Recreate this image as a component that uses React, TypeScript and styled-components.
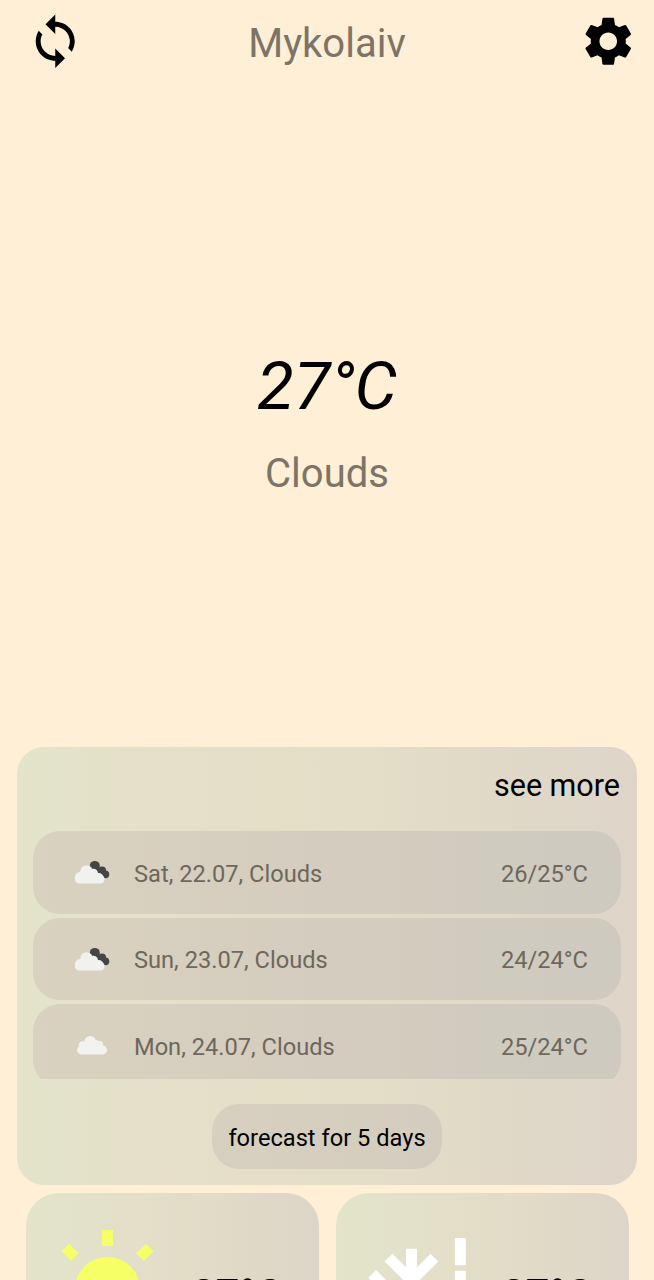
import React from "react";
import styled, { createGlobalStyle } from "styled-components";

const GlobalStyle = createGlobalStyle`
  * { box-sizing: border-box; }
  body { margin: 0; background: #ffefd7; }
`;

const Screen = styled.main`
  height: 1280px;
  overflow: hidden;
  display: flex;
  flex-direction: column;
  background: #ffefd7;
  font-family: Roboto, "Liberation Sans", sans-serif;
  color: #000;
`;

const Header = styled.header`
  flex: none;
  height: 86px;
  padding: 12px 17px 0 26px;
  display: flex;
  justify-content: space-between;
  align-items: flex-start;
`;

const IconButton = styled.button`
  display: block;
  width: 58.5px;
  height: 58.5px;
  padding: 0;
  border: 0;
  background: none;
  svg { display: block; width: 100%; height: 100%; }
`;

const City = styled.h1`
  margin: 8px 9px 0 0;
  font-size: 40px;
  line-height: 48px;
  font-weight: 400;
  color: #7c7467;
`;

const Current = styled.section`
  flex: none;
  height: 661px;
  padding-top: 260px;
  display: flex;
  flex-direction: column;
  align-items: center;
`;

const Temperature = styled.div`
  font-size: 67px;
  line-height: 80px;
  font-style: italic;
`;

const Condition = styled.div`
  margin-top: 24px;
  font-size: 40px;
  line-height: 48px;
  color: #7c7467;
`;

const Panel = styled.section`
  flex: none;
  height: 438px;
  margin: 0 17px;
  padding: 17px 16px 0;
  border-radius: 27px;
  background: linear-gradient(90deg, #e3e4cb 0%, #e5e0c9 20%, #e4ddc7 55%, #dfd8c8 85%, #ded5c8 100%);
  display: flex;
  flex-direction: column;
  align-items: center;
`;

const SeeMore = styled.a`
  align-self: flex-end;
  height: 67px;
  padding-right: 1px;
  font-size: 30.5px;
  line-height: 44px;
`;

const DayList = styled.div`
  width: 100%;
  height: 248px;
  overflow: hidden;
  display: flex;
  flex-direction: column;
  gap: 4px;
`;

const DayRow = styled.div`
  flex: none;
  height: 82.6px;
  padding: 0 33px 0 41px;
  border-radius: 27px;
  background: linear-gradient(90deg, #d9d2c0, #d4cdbf 50%, #cecabf);
  display: flex;
  align-items: center;
  font-size: 23.65px;
  color: #6d675d;
  svg { width: 36px; height: 26px; margin-right: 24px; }
`;

const DayLabel = styled.span`
  padding-top: 3px;
`;

const DayTemp = styled.span`
  margin-left: auto;
  padding-top: 3px;
`;

const ForecastButton = styled.button`
  width: 230px;
  height: 65px;
  margin-top: 25px;
  padding: 2px 0 0;
  border: 0;
  border-radius: 27px;
  background: linear-gradient(90deg, #d7d0bf, #d3cdbf);
  font: 400 23.65px Roboto, sans-serif;
  color: #000;
  white-space: nowrap;
`;

const Cards = styled.section`
  flex: none;
  margin: 8px 25.5px 0;
  display: flex;
  gap: 17px;
`;

const Card = styled.article`
  flex: 1;
  height: 200px;
  padding: 34px 35.5px 0 16px;
  border-radius: 33px;
  background: linear-gradient(90deg, #e3e4cb 0%, #e3dec8 45%, #ddd5c7 100%);
  display: flex;
  justify-content: space-between;
  svg { flex: none; width: 131px; height: 131px; }
`;

const CardTemp = styled.div`
  margin-top: 42px;
  font-size: 42.5px;
  line-height: 52px;
`;

const CloudIcon = () => (
  <svg viewBox="0 0 36 26" fill="#f2f2f0">
    <circle cx="16.2" cy="9.6" r="5.7" />
    <circle cx="8.8" cy="13.2" r="4" />
    <circle cx="25.2" cy="13" r="4" />
    <circle cx="22" cy="11" r="3" />
    <rect x="3" y="13.6" width="30" height="8.8" rx="4.4" />
    <rect x="9" y="9.8" width="16" height="9" />
  </svg>
);

const BrokenCloudsIcon = () => (
  <svg viewBox="0 -0.7 36 26">
    <g fill="#454545">
      <circle cx="20.8" cy="6.2" r="5" />
      <circle cx="28" cy="10.8" r="4.1" />
      <circle cx="31.4" cy="14.6" r="3.9" />
      <path d="M20 6l8 4 4 8h-8z" />
    </g>
    <g fill="#f1f1ef">
      <circle cx="12.6" cy="11.8" r="6.2" />
      <circle cx="6.6" cy="17.8" r="5.8" />
      <circle cx="19.2" cy="13.8" r="4.8" />
      <circle cx="24.8" cy="18" r="4.6" />
      <rect x="1" y="15" width="29.6" height="8.7" rx="4.3" />
    </g>
  </svg>
);

const days = [
  { label: "Sat, 22.07, Clouds", temp: "26/25°C", Icon: BrokenCloudsIcon },
  { label: "Sun, 23.07, Clouds", temp: "24/24°C", Icon: BrokenCloudsIcon },
  { label: "Mon, 24.07, Clouds", temp: "25/24°C", Icon: CloudIcon },
];

export default function App() {
  return (
    <>
      <GlobalStyle />
      <Screen>
        <Header>
          <IconButton aria-label="Refresh">
            <svg viewBox="0 0 24 24">
              <path d="M12 4V1L8 5l4 4V6c3.31 0 6 2.69 6 6 0 1.01-.25 1.97-.7 2.8l1.46 1.46C19.54 15.03 20 13.57 20 12c0-4.42-3.58-8-8-8zm0 14c-3.31 0-6-2.69-6-6 0-1.01.25-1.97.7-2.8L5.24 7.74C4.46 8.97 4 10.43 4 12c0 4.42 3.58 8 8 8v3l4-4-4-4v3z" />
            </svg>
          </IconButton>
          <City>Mykolaiv</City>
          <IconButton aria-label="Settings">
            <svg viewBox="0 0 24 24">
              <path d="M19.14 12.94c.04-.3.06-.61.06-.94 0-.32-.02-.64-.07-.94l2.03-1.58c.18-.14.23-.41.12-.61l-1.92-3.32c-.12-.22-.37-.29-.59-.22l-2.39.96c-.5-.38-1.03-.7-1.62-.94l-.36-2.54c-.04-.24-.24-.41-.48-.41h-3.84c-.24 0-.43.17-.47.41l-.36 2.54c-.59.24-1.13.57-1.62.94l-2.39-.96c-.22-.08-.47 0-.59.22L2.74 8.87c-.12.21-.08.47.12.61l2.03 1.58c-.05.3-.09.63-.09.94s.02.64.07.94l-2.03 1.58c-.18.14-.23.41-.12.61l1.92 3.32c.12.22.37.29.59.22l2.39-.96c.5.38 1.03.7 1.62.94l.36 2.54c.05.24.24.41.48.41h3.84c.24 0 .44-.17.47-.41l.36-2.54c.59-.24 1.13-.56 1.62-.94l2.39.96c.22.08.47 0 .59-.22l1.92-3.32c.12-.22.07-.47-.12-.61l-2.01-1.58zM12 15.6c-1.98 0-3.6-1.62-3.6-3.6s1.62-3.6 3.6-3.6 3.6 1.62 3.6 3.6-1.62 3.6-3.6 3.6z" />
            </svg>
          </IconButton>
        </Header>
        <Current>
          <Temperature>27°C</Temperature>
          <Condition>Clouds</Condition>
        </Current>
        <Panel>
          <SeeMore>see more</SeeMore>
          <DayList>
            {days.map(({ label, temp, Icon }) => (
              <DayRow key={label}>
                <Icon />
                <DayLabel>{label}</DayLabel>
                <DayTemp>{temp}</DayTemp>
              </DayRow>
            ))}
          </DayList>
          <ForecastButton>forecast for 5 days</ForecastButton>
        </Panel>
        <Cards>
          <Card>
            <svg viewBox="0 0 24 24" fill="#f7ff66">
              <path d="M6.76 4.84l-1.8-1.79-1.41 1.41 1.79 1.79 1.42-1.41zM4 10.5H1v2h3v-2zm9-9.95h-2V3.5h2V.55zm7.45 3.91l-1.41-1.41-1.79 1.79 1.41 1.41 1.79-1.79zM20 10.5v2h3v-2h-3zm-8-5c-3.31 0-6 2.69-6 6s2.69 6 6 6 6-2.69 6-6-2.69-6-6-6z" />
            </svg>
            <CardTemp>27°C</CardTemp>
          </Card>
          <Card>
            <svg viewBox="0 0 24 24" fill="none" stroke="#fff" strokeWidth="2">
              <path d="M10.9 4v18M2 13h18M6.7 5.6l4.2 4.2 4.2-4.2M3.7 8.6L8.1 13l-4.4 4.4M19.85 2v5M19.85 8v2M6.7 20.4l4.2-4.2 4.2 4.2" />
            </svg>
            <CardTemp>27°C</CardTemp>
          </Card>
        </Cards>
      </Screen>
    </>
  );
}
